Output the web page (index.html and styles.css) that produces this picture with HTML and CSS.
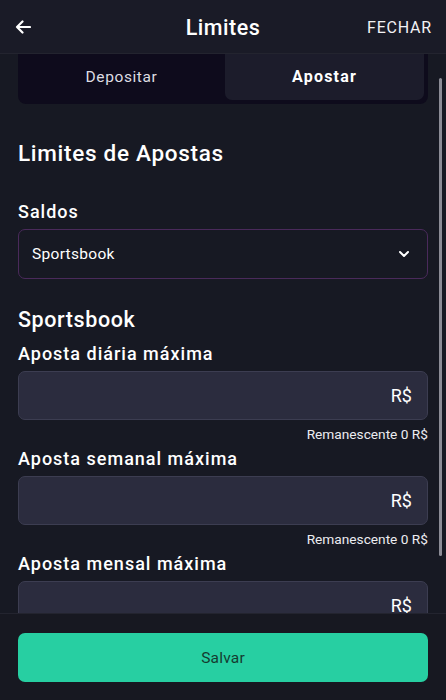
FILE: index.html
```html
<!DOCTYPE html>
<html lang="pt">
<head>
<meta charset="utf-8">
<title>Limites</title>
<link rel="stylesheet" href="styles.css">
</head>
<body>
<div class="app">
  <header class="topbar">
    <button class="back" aria-label="Voltar">
      <svg width="16" height="14" viewBox="0 0 16 14"><path d="M15 7H2M7.5 1.5L2 7l5.5 5.5" fill="none" stroke="#fff" stroke-width="2.2" stroke-linecap="round" stroke-linejoin="round"/></svg>
    </button>
    <h1 class="title">Limites</h1>
    <button class="close">FECHAR</button>
  </header>
  <main class="scroll">
    <div class="content">
      <div class="tabs">
        <div class="tab">Depositar</div>
        <div class="tab active">Apostar</div>
      </div>
      <h2 class="section-title">Limites de Apostas</h2>
      <div class="label saldos">Saldos</div>
      <div class="select">
        <span>Sportsbook</span>
        <svg width="12" height="8" viewBox="0 0 12 8"><path d="M2 2l4 4 4-4" fill="none" stroke="#fff" stroke-width="2" stroke-linecap="round" stroke-linejoin="round"/></svg>
      </div>
      <h3 class="sub-title">Sportsbook</h3>
      <div class="field">
        <div class="label">Aposta diária máxima</div>
        <div class="input"><span>R$</span></div>
        <div class="rem">Remanescente 0 R$</div>
      </div>
      <div class="field">
        <div class="label">Aposta semanal máxima</div>
        <div class="input"><span>R$</span></div>
        <div class="rem">Remanescente 0 R$</div>
      </div>
      <div class="field">
        <div class="label">Aposta mensal máxima</div>
        <div class="input"><span>R$</span></div>
        <div class="rem">Remanescente 0 R$</div>
      </div>
    </div>
    <div class="scrollbar"></div>
  </main>
  <footer class="footer">
    <button class="save">Salvar</button>
  </footer>
</div>
</body>
</html>
```
FILE: styles.css
```css
* { box-sizing: border-box; }
html, body { margin: 0; padding: 0; }
body {
  background: #171923;
  font-family: Roboto, "Noto Sans", sans-serif;
  color: #fff;
  width: 446px;
  height: 700px;
  overflow: hidden;
}
.app {
  display: flex;
  flex-direction: column;
  height: 700px;
}
.topbar {
  height: 54px;
  flex: none;
  display: flex;
  align-items: center;
  justify-content: space-between;
  padding: 1px 14px 0 13px;
  background: #1a1b27;
  border-bottom: 1px solid #23242f;
  position: relative;
}
.back {
  background: none;
  border: 0;
  padding: 0;
  width: 20px;
  height: 20px;
  display: flex;
  align-items: center;
  justify-content: center;
}
.title {
  margin: 0;
  font-size: 21.5px;
  font-weight: 500;
  letter-spacing: 0.5px;
  position: absolute;
  left: 0;
  right: 0;
  text-align: center;
  pointer-events: none;
}
.close {
  background: none;
  border: 0;
  padding: 0;
  color: #f2f2f4;
  font-family: inherit;
  font-size: 16px;
  font-weight: 400;
  letter-spacing: 0.8px;
}
.scroll {
  flex: 1;
  overflow: hidden;
  position: relative;
}
.content {
  padding: 0 18px;
}
.tabs {
  height: 50px;
  background: #0e0b1c;
  border-radius: 0 0 8px 8px;
  display: grid;
  grid-template-columns: 1fr 1fr;
  padding: 0 4px 4px 4px;
  gap: 4px;
}
.tab {
  display: flex;
  align-items: center;
  justify-content: center;
  font-size: 15.5px;
  color: #dedde3;
  letter-spacing: 0.6px;
  padding-bottom: 1px;
}
.tab.active {
  background: #1c1c2b;
  border-radius: 0 0 7px 7px;
  color: #fff;
  font-weight: 700;
  font-size: 16px;
  letter-spacing: 1.2px;
}
.section-title {
  margin: 35px 0 0;
  font-size: 22.5px;
  line-height: 28px;
  font-weight: 500;
  letter-spacing: 0.7px;
}
.label {
  font-size: 18px;
  line-height: 24px;
  font-weight: 500;
  letter-spacing: 1px;
}
.saldos {
  margin-top: 33px;
}
.select {
  margin-top: 5px;
  height: 50px;
  border: 1.5px solid #4a2a5b;
  border-radius: 7px;
  display: flex;
  align-items: center;
  justify-content: space-between;
  padding: 0 17px 0 13px;
  font-size: 15.5px;
  letter-spacing: 0.3px;
}
.sub-title {
  margin: 27px 0 0;
  font-size: 21.5px;
  line-height: 28px;
  font-weight: 500;
  letter-spacing: 0.6px;
}
.field {
  margin-top: 8px;
}
.field + .field {
  margin-top: 4px;
}
.field .input {
  margin-top: 5px;
  height: 49px;
  background: #2b2c3e;
  border: 1px solid #3c3d51;
  border-radius: 7px;
  display: flex;
  align-items: center;
  justify-content: flex-end;
  padding: 0 15px;
  font-size: 18px;
}
.rem {
  margin-top: 5px;
  line-height: 18px;
  font-size: 13.7px;
  text-align: right;
  color: #ececf0;
}
.scrollbar {
  position: absolute;
  right: 4px;
  top: 24px;
  width: 3px;
  height: 478px;
  background: #8c8c96;
  border-radius: 2px;
}
.footer {
  flex: none;
  height: 87px;
  background: #171821;
  border-top: 1px solid #23242f;
  padding: 19px 18px 0;
}
.save {
  width: 100%;
  height: 49px;
  border: 0;
  border-radius: 7px;
  background: #27cfa2;
  color: #153b30;
  font-family: inherit;
  font-size: 15.5px;
  letter-spacing: 0.2px;
}
```
